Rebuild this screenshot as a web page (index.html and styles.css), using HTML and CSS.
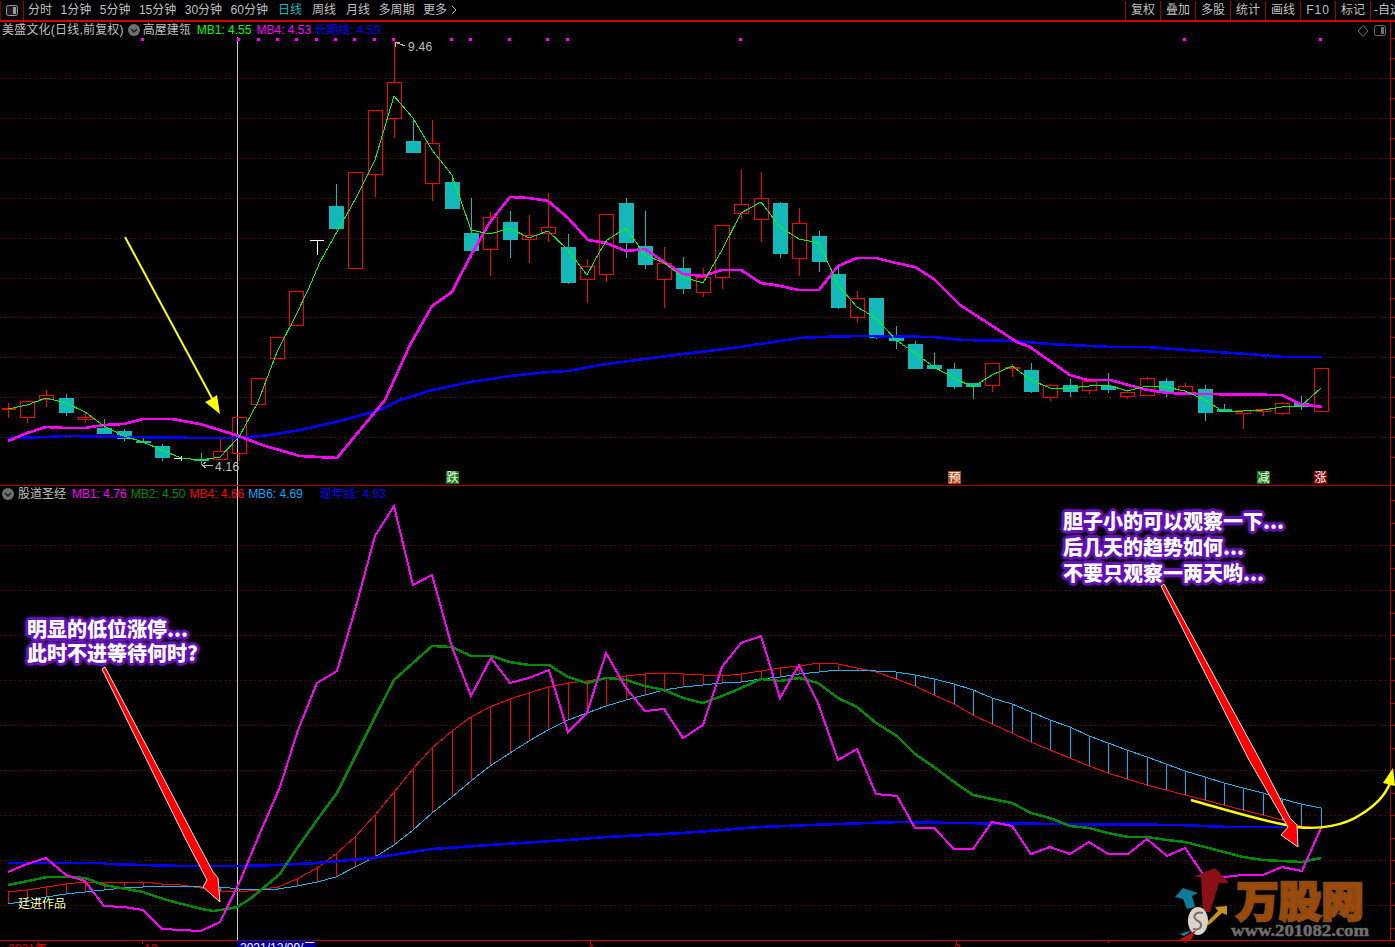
FILE: index.html
```html
<!DOCTYPE html>
<html lang="zh-CN">
<head>
<meta charset="utf-8">
<title>美盛文化</title>
<link rel="stylesheet" href="styles.css">
</head>
<body>
<div class="app">
  <header class="toolbar">
    <div class="tool-icon">
      <svg class="layout-icon" viewBox="0 0 12 11"><rect x="0.5" y="0.5" width="11" height="10" rx="2" class="layout-frame"/><rect x="7" y="2" width="3" height="7" class="layout-fill"/></svg>
    </div>
    <nav class="periods">
      <span>分时</span><span>1分钟</span><span>5分钟</span><span>15分钟</span><span>30分钟</span><span>60分钟</span><span class="active nudge">日线</span><span class="nudge">周线</span><span class="nudge">月线</span><span>多周期</span><span class="more">更多<svg class="more-chev" viewBox="0 0 6 10"><path d="M1 1l4 4-4 4"/></svg></span>
    </nav>
    <nav class="tools">
      <span>复权</span><span>叠加</span><span>多股</span><span>统计</span><span>画线</span><span class="wide">F10</span><span>标记</span><span class="clip">-自选</span>
    </nav>
  </header>

  <section class="pane pane-main">
    <svg class="canvas" width="1395" height="463" viewBox="0 22 1395 463">
      <path class="grid" d="M0 78.5H1390M0 118.5H1390M0 158.5H1390M0 198.5H1390M0 238.5H1390M0 278.5H1390M0 317.5H1390M0 357.5H1390M0 397.5H1390M0 437.5H1390"/>
      <path class="axis" d="M1390.5 22V485M1390 38.5h5M1390 58.5h5M1390 78.5h5M1390 98.5h5M1390 118.5h5M1390 138.5h5M1390 158.5h5M1390 178.5h5M1390 198.5h5M1390 218.5h5M1390 238.5h5M1390 258.5h5M1390 278.5h5M1390 298.5h5M1390 317.5h5M1390 337.5h5M1390 357.5h5M1390 377.5h5M1390 397.5h5M1390 417.5h5M1390 437.5h5M1390 457.5h5"/>
      <path class="cross" d="M237.5 37V485"/>
      <path class="dots" d="M141 38h3v3h-3zM237 38h3v3h-3zM257 38h3v3h-3zM276 38h3v3h-3zM295 38h3v3h-3zM315 38h3v3h-3zM334 38h3v3h-3zM353 38h3v3h-3zM373 38h3v3h-3zM392 38h3v3h-3zM450 38h3v3h-3zM469 38h3v3h-3zM508 38h3v3h-3zM546 38h3v3h-3zM566 38h3v3h-3zM739 38h3v3h-3zM1183 38h3v3h-3zM1319 38h3v3h-3z"/>

      <path class="wick-teal" d="M66.5 394V416M104.5 419V434M124.5 429V441M143.5 437V443M162.5 444V461M201.5 453V465M336.5 184V230M413.5 118V153M452.5 175V209M471.5 198V258M510.5 211V258M568.5 234V284M626.5 198V258M645.5 211V269M683.5 257V294M780.5 202V258M819.5 231V272M838.5 267V309M876.5 298V339M896.5 326V349M915.5 341V369M934.5 353V369M954.5 363V389M973.5 383V399M1031.5 363V393M1070.5 379V397M1108.5 373V393M1166.5 378V397M1205.5 385V421M1224.5 404V412M1301.5 396V410"/>
      <path class="body-teal" d="M59 398h15v15h-15zM97 428h15v6h-15zM117 431h15v8h-15zM136 441h15v2h-15zM155 446h15v12h-15zM194 459h15v2h-15zM329 206h15v23h-15zM406 141h15v12h-15zM445 182h15v27h-15zM464 233h15v18h-15zM503 222h15v18h-15zM561 247h15v36h-15zM619 203h15v40h-15zM638 246h15v19h-15zM676 268h15v21h-15zM773 203h15v51h-15zM812 236h15v26h-15zM831 274h15v34h-15zM869 298h15v40h-15zM889 335h15v6h-15zM908 344h15v25h-15zM927 365h15v4h-15zM947 369h15v18h-15zM966 383h15v4h-15zM1024 370h15v22h-15zM1063 385h15v7h-15zM1101 386h15v4h-15zM1159 381h15v11h-15zM1198 389h15v24h-15zM1217 409h15v3h-15zM1294 403h15v4h-15z"/>
      <path class="candle-red" d="M1.5 409.5H16M1.5 408.5H16M8.5 403V418M20.5 401.5h14v16h-14zM27.5 418V423M39.5 395.5h14v4h-14zM46.5 390V395M46.5 400V407M78.5 417.5h14v2h-14zM85.5 413V417M85.5 420V423M213.5 451.5h14v8h-14zM220.5 439V451M232.5 417.5h14v36h-14zM239.5 454V461M251.5 378.5h14v26h-14zM270.5 337.5h14v21h-14zM289.5 291.5h14v34h-14zM348.5 172.5h14v96h-14zM368.5 110.5h14v64h-14zM375.5 175V197M387.5 82.5h14v36h-14zM394.5 40V82M394.5 119V138M425.5 143.5h14v40h-14zM432.5 120V143M432.5 184V201M483.5 217.5h14v32h-14zM490.5 212V217M490.5 250V276M522.5 235.5h14v4h-14zM529.5 215V235M529.5 240V263M541.5 227.5h14v6h-14zM548.5 193V227M548.5 234V242M580.5 266.5h14v13h-14zM587.5 259V266M587.5 280V303M599.5 214.5h14v60h-14zM606.5 275V282M657.5 263.5h14v16h-14zM664.5 247V263M664.5 280V308M696.5 277.5h14v15h-14zM703.5 268V277M703.5 293V297M715.5 225.5h14v52h-14zM722.5 278V289M734.5 204.5h14v9h-14zM741.5 170V204M741.5 214V219M754.5 198.5h14v21h-14zM761.5 172V198M761.5 220V242M792.5 223.5h14v35h-14zM799.5 208V223M799.5 259V276M850.5 298.5h14v19h-14zM857.5 291V298M857.5 318V323M985.5 363.5h14v22h-14zM992.5 386V392M1005.5 367.5h14v1h-14zM1012.5 364V377M1043.5 385.5h14v12h-14zM1050.5 384V385M1050.5 398V401M1082.5 381.5h14v9h-14zM1089.5 378V381M1089.5 391V394M1120.5 392.5h14v4h-14zM1127.5 390V392M1127.5 397V399M1140.5 378.5h14v17h-14zM1147.5 377V378M1178.5 386.5h14v6h-14zM1185.5 383V386M1185.5 393V395M1236.5 410.5h14v3h-14zM1243.5 414V429M1256.5 409.5h14v2h-14zM1263.5 412V416M1275.5 403.5h14v10h-14zM1282.5 402V403M1282.5 414V415M1314.5 368.5h14v43h-14z"/>
      <path class="doji" d="M174 458.5H182M181.5 456V461M310 240.5H324M317.5 240V255"/>

      <polyline class="ma-blue" points="8,438 46,437 66,436 200,438 239,438 270,435 300,430 340,421 380,410 400,400 432,390 471,382 510,376 548,372 568,371 600,365 667,356 733,348 800,338 820,337 860,336 933,337 963,340 1013,341 1050,344 1110,347 1147,347 1187,350 1247,354 1283,357 1322,357"/>
      <polyline class="ma-magenta" points="8,441 27,433 46,427 66,428 85,428 104,425 124,424 143,419 172,419 200,424 239,436 262,445 300,456 337,458 360,430 385,400 410,345 432,306 452,292 471,255 490,222 510,197 529,198 548,201 568,218 588,240 606,243 626,251 645,249 664,262 683,274 703,276 722,270 741,270 761,283 780,286 799,290 819,290 838,266 857,258 876,258 896,263 915,267 934,279 960,305 1017,342 1030,347 1070,375 1087,380 1110,380 1143,389 1167,393 1203,394 1282,395 1300,404 1322,407"/>
      <polyline class="ma-green" points="8,409 27,405 46,398 66,403 85,412 104,426 124,436 143,442 162,450 181,458 201,460 220,457 239,437 258,402 277,352 296,315 308,290 320,262 356,198 375,160 394,96 413,118 432,150 452,175 471,230 490,234 510,228 529,238 548,231 568,250 587,275 600,251 607,240 626,228 645,255 664,263 683,277 703,283 722,250 741,213 761,202 780,227 799,239 819,243 838,285 857,307 876,318 896,340 915,353 934,367 954,378 973,387 992,375 1012,366 1031,380 1050,388 1070,388 1089,386 1108,385 1127,391 1147,386 1166,387 1185,391 1205,400 1224,412 1243,411 1263,410 1282,407 1301,406 1321,388"/>

      <path class="arrow-yellow-line" d="M125 237L214 402"/>
      <path class="arrow-yellow-head" d="M220 414L205 402L211 399L217 395Z"/>

      <path class="leader" d="M405 46L395 42M395 42h5M395 42v5M213 465H202M202 465l4-3M202 465l4 3"/>
      <text class="price" x="408" y="51">9.46</text>
      <text class="price" x="215" y="471">4.16</text>

      <rect class="sig sig-green" x="446" y="471" width="13" height="13"/><text class="sig-text" x="452.5" y="482">跌</text>
      <rect class="sig sig-orange" x="948" y="471" width="13" height="13"/><text class="sig-text" x="954.5" y="482">预</text>
      <rect class="sig sig-green" x="1257" y="471" width="13" height="13"/><text class="sig-text" x="1263.5" y="482">减</text>
      <rect class="sig sig-red" x="1314" y="471" width="13" height="13"/><text class="sig-text" x="1320.5" y="482">涨</text>
    </svg>

    <div class="legend legend-main">
      <span class="title">美盛文化(日线,前复权)</span>
      <svg class="chev" viewBox="0 0 12 12"><circle cx="6" cy="6" r="6" class="chev-bg"/><path d="M3 5l3 3 3-3" class="chev-mark"/></svg>
      <span class="name">高屋建瓴</span>
      <span class="lime gap-6">MB1: 4.55</span>
      <span class="pink gap-5">MB4: 4.53</span>
      <span class="blue gap-3">长期线: 4.50</span>
    </div>
    <svg class="corner" width="34" height="14" viewBox="0 0 34 14">
      <path class="corner-line" d="M8 1.5L13 7 8 12.5 3 7Z"/>
      <rect class="corner-line" x="19.5" y="1.5" width="11" height="10" rx="2"/>
      <rect class="corner-fill" x="26" y="3" width="3" height="7"/>
    </svg>
  </section>

  <section class="pane pane-sub">
    <svg class="canvas" width="1395" height="454" viewBox="0 486 1395 454">
      <path class="grid" d="M0 545.5H1390M0 590.5H1390M0 635.5H1390M0 680.5H1390M0 725.5H1390M0 770.5H1390M0 815.5H1390M0 860.5H1390M0 905.5H1390"/>
      <path class="axis" d="M1390.5 486V940M1390 500.5h5M1390 523.5h5M1390 545.5h5M1390 568.5h5M1390 590.5h5M1390 613.5h5M1390 635.5h5M1390 658.5h5M1390 680.5h5M1390 703.5h5M1390 725.5h5M1390 748.5h5M1390 770.5h5M1390 793.5h5M1390 815.5h5M1390 838.5h5M1390 860.5h5M1390 883.5h5M1390 905.5h5M1390 928.5h5"/>
      <path class="cross" d="M237.5 486V940"/>

      <path class="hatch-red" d="M8.5 892V904M27.5 890V901M46.5 887V897M66.5 884V894M85.5 882V892M104.5 882V890M124.5 882V888M143.5 882V887M162.5 884V886M181.5 885V886M278.5 887V889M297.5 879V886M317.5 868V882M336.5 854V877M355.5 837V867M375.5 815V857M394.5 792V845M413.5 769V830M432.5 748V813M452.5 731V797M471.5 717V781M490.5 707V766M510.5 699V753M529.5 693V741M548.5 687V730M568.5 683V720M587.5 681V713M606.5 678V706M626.5 676V700M645.5 674V695M664.5 673V690M683.5 674V687M703.5 675V685M722.5 676V683M741.5 674V682M761.5 671V679M780.5 668V677M799.5 666V674M819.5 663V672M838.5 664V670M857.5 668V670"/>
      <path class="hatch-cyan" d="M201.5 887V888M220.5 887V891M239.5 889V892M258.5 889V890M876.5 671V672M896.5 672V679M915.5 675V686M934.5 679V695M954.5 684V704M973.5 690V715M992.5 698V724M1012.5 704V733M1031.5 712V742M1050.5 720V750M1070.5 727V758M1089.5 736V766M1108.5 743V773M1127.5 750V779M1147.5 757V785M1166.5 764V790M1185.5 771V795M1205.5 777V800M1224.5 783V805M1243.5 788V810M1263.5 793V815M1282.5 799V820M1301.5 804V826M1321.5 808V828"/>
      <polyline class="ln-red" points="8,892 27,890 46,887 66,884 85,882 104,882 124,882 143,882 162,884 181,885 201,888 220,891 239,892 258,890 278,887 297,879 317,868 336,854 355,837 375,815 394,792 413,769 432,748 452,731 471,717 490,707 510,699 529,693 548,687 568,683 587,681 606,678 626,676 645,674 664,673 683,674 703,675 722,676 741,674 761,671 780,668 799,666 819,663 838,664 857,668 876,672 896,679 915,686 934,695 954,704 973,715 992,724 1012,733 1031,742 1050,750 1070,758 1089,766 1108,773 1127,779 1147,785 1166,790 1185,795 1205,800 1224,805 1243,810 1263,815 1282,820 1301,826 1321,828"/>
      <polyline class="ln-cyan" points="8,904 27,901 46,897 66,894 85,892 104,890 124,888 143,887 162,886 181,886 201,887 220,887 239,889 258,889 278,889 297,886 317,882 336,877 355,867 375,857 394,845 413,830 432,813 452,797 471,781 490,766 510,753 529,741 548,730 568,720 587,713 606,706 626,700 645,695 664,690 683,687 703,685 722,683 741,682 761,679 780,677 799,674 819,672 838,670 857,670 876,671 896,672 915,675 934,679 954,684 973,690 992,698 1012,704 1031,712 1050,720 1070,727 1089,736 1108,743 1127,750 1147,757 1166,764 1185,771 1205,777 1224,783 1243,788 1263,793 1282,799 1301,804 1321,808"/>
      <polyline class="ln-blue" points="8,863 103,863 107,864 143,865 182,866 240,866 277,865 317,863 373,858 432,849 490,845 568,840 607,837 683,833 760,827 837,824 900,822 953,823 1060,824 1180,825 1227,827 1285,827"/>
      <polyline class="ln-green" points="8,885 28,881 47,877 67,877 85,878 104,885 143,892 163,899 182,904 202,909 213,911 227,909 237,907 250,899 280,874 298,847 317,820 337,793 355,757 375,717 394,680 413,663 432,646 452,647 471,656 491,656 510,662 529,665 549,665 568,677 587,683 606,678 626,680 645,686 664,690 683,698 703,703 722,696 741,688 761,679 780,681 799,678 818,683 838,698 857,707 876,723 897,736 915,754 934,767 954,782 973,795 992,799 1012,803 1031,813 1050,818 1070,826 1089,828 1108,833 1128,837 1147,837 1167,840 1185,842 1205,847 1224,852 1243,857 1263,860 1282,861 1302,862 1321,858"/>
      <polyline class="ln-magenta" points="8,872 27,864 46,858 66,875 85,881 104,906 124,907 143,910 162,929 181,930 201,931 220,922 240,881 260,833 280,787 298,730 317,683 337,671 355,610 375,536 394,506 413,585 432,575 452,647 471,696 491,658 510,683 529,678 549,670 568,732 587,713 606,653 626,688 645,711 664,709 683,738 703,725 722,667 741,643 761,636 780,698 799,665 818,703 838,760 857,749 876,794 897,796 915,828 934,828 954,849 973,849 992,822 1012,826 1031,854 1050,847 1070,854 1089,842 1108,854 1128,854 1147,839 1167,856 1185,848 1205,877 1224,877 1243,875 1263,875 1282,867 1302,871 1321,828"/>

      <path class="curve" d="M1191 800C1230 811 1265 822 1297 827C1320 830 1345 825 1360 815C1375 806 1385 796 1390 783"/>
      <path class="curve-head" d="M1393 768L1383 783L1395 786Z"/>

      <path class="big-arrow" d="M102 669L105 667L196 840L213 872L218 878L220 902L203 887L207 880L186 840Z"/>
      <path class="big-arrow" d="M1161 586L1164 584L1260 760L1290 818L1297 825L1298 847L1281 835L1288 827L1249 760Z"/>

      <text class="author" x="18" y="908">廷进作品</text>

      <g class="mark">
        <path class="mark-red" d="M1215 868L1193 877H1201L1203 912H1210L1219 883H1229Z"/>
        <path class="mark-teal" d="M1175 897L1183 888L1198 893L1192 896L1195 907L1187 909L1183 899Z"/>
        <path class="mark-gold" d="M1206 923L1218 911L1215 907L1227 906L1227 915L1222 913L1209 925Z"/>
        <ellipse class="mark-ball" cx="1198" cy="921" rx="10" ry="14"/>
        <path class="mark-dollar" d="M1203 913C1195 911 1191 918 1198 921C1204 924 1201 931 1193 929"/>
        <path class="mark-streak-red" d="M1179 940L1196 930L1191 940Z"/>
        <path class="mark-streak-blue" d="M1180 934L1193 930L1184 936Z"/>
        <text class="mark-name" x="1236" y="917" textLength="128" lengthAdjust="spacingAndGlyphs">万股网</text>
        <text class="mark-url" x="1231" y="936" textLength="138" lengthAdjust="spacingAndGlyphs">www.201082.com</text>
      </g>
    </svg>

    <div class="legend legend-sub">
      <svg class="chev" viewBox="0 0 12 12"><circle cx="6" cy="6" r="6" class="chev-bg"/><path d="M3 5l3 3 3-3" class="chev-mark"/></svg>
      <span class="name-sub">股道圣经</span>
      <span class="pink gap-6">MB1: 4.76</span>
      <span class="dgreen gap-4">MB2: 4.50</span>
      <span class="red gap-4">MB4: 4.66</span>
      <span class="sky gap-4">MB6: 4.69</span>
      <span class="blue gap-17">现年线: 4.93</span>
    </div>

    <p class="note note-left">明显的低位涨停...<br>此时不进等待何时?</p>
    <p class="note note-right">胆子小的可以观察一下...<br>后几天的趋势如何...<br>不要只观察一两天哟...</p>
  </section>

  <footer class="time-axis">
    <svg class="canvas" width="1395" height="7" viewBox="0 940 1395 7">
      <path class="axis-strong" d="M0 940.5H1395M142.5 941V944M590.5 941V944M956.5 941V944M1108.5 941V943M1185.5 941V943"/>
      <rect class="date-box" x="238" y="941" width="77" height="6"/>
      <text class="tick" x="8" y="953">2021年</text>
      <text class="tick" x="144" y="953">12</text>
      <text class="date" x="240" y="952">2021/12/09/三</text>
      <text class="tick" x="588" y="953">1</text>
      <text class="tick" x="954" y="953">2</text>
    </svg>
  </footer>
</div>
</body>
</html>
```
FILE: styles.css
```css
* { box-sizing: border-box; }
html, body { margin: 0; padding: 0; background: #000; }
body { font-family: "Liberation Sans", "Noto Sans CJK SC", sans-serif; font-size: 12px; color: #c0c0c0; overflow: hidden; }
.app { width: 1395px; height: 947px; display: flex; flex-direction: column; overflow: hidden; }

/* toolbar */
.toolbar { height: 22px; flex: none; display: flex; align-items: stretch; border-bottom: 2px solid #d40000; line-height: 20px; white-space: nowrap; }
.tool-icon { width: 24px; flex: none; display: flex; align-items: center; justify-content: center; border-left: 1px solid #800000; border-right: 1px solid #a00000; margin-top: 1px; }
.layout-icon { width: 12px; height: 11px; }
.layout-frame { fill: #1c1c1c; stroke: #9a9a9a; }
.layout-fill { fill: #9a9a9a; }
.periods { display: flex; gap: 8.5px; padding-left: 4px; }
.periods .active { color: #12bcc0; }
.periods .nudge { margin-left: 1.5px; }
.more { display: flex; align-items: center; gap: 4px; }
.more-chev { width: 6px; height: 10px; fill: none; stroke: #c0c0c0; stroke-width: 1; }
.tools { margin-left: auto; display: flex; width: 270px; flex: none; }
.tools span { width: 35px; flex: none; text-align: center; border-left: 1px solid #a00000; margin-top: 1px; line-height: 19px; }
.tools .wide { letter-spacing: 1px; }
.tools .clip { width: 26px; text-align: left; padding-left: 3px; overflow: hidden; }

/* panes */
.pane { position: relative; flex: none; }
.pane-main { height: 464px; border-bottom: 1px solid #a00000; }
.pane-sub { height: 454px; }
.canvas { display: block; }
.legend { position: absolute; left: 0; display: flex; align-items: center; height: 16px; line-height: 16px; white-space: nowrap; }
.legend-main { top: 0; padding-left: 2px; }
.legend-sub { top: 0; padding-left: 2px; }
.chev { width: 12px; height: 12px; flex: none; }
.chev-bg { fill: #707070; }
.chev-mark { fill: none; stroke: #1a1a1a; stroke-width: 1.4; }
.title { margin-right: 4px; letter-spacing: 0.2px; }
.name { margin-left: 3px; }
.name-sub { margin-left: 4px; }
.gap-3 { margin-left: 3px; }
.gap-4 { margin-left: 4px; }
.gap-5 { margin-left: 5px; }
.gap-6 { margin-left: 6px; }
.gap-17 { margin-left: 17px; }
.lime { color: #00ff00; }
.pink { color: #ff00ff; }
.blue { color: #0000ff; }
.dgreen { color: #008a00; }
.red { color: #ff0000; }
.sky { color: #00aaff; }
.corner { position: absolute; top: 2px; right: 6px; }
.corner-line { fill: none; stroke: #707070; }
.corner-fill { fill: #707070; }

/* chart drawing */
.canvas path, .canvas polyline { shape-rendering: crispEdges; }
.grid { stroke: #800000; stroke-width: 1; stroke-dasharray: 1 4; fill: none; }
.axis { stroke: #c00000; stroke-width: 1; fill: none; }
.cross { stroke: #c8c8c8; stroke-width: 1; fill: none; }
.dots { fill: #ff00ff; }
.wick-teal { stroke: #14b8b8; stroke-width: 1; fill: none; }
.body-teal { fill: #14b8b8; }
.candle-red { stroke: #ff0000; stroke-width: 1; fill: none; }
.doji { stroke: #fff; stroke-width: 1; fill: none; }
.ma-blue { fill: none; stroke: #0000ff; stroke-width: 2.6; }
.ma-magenta { fill: none; stroke: #ff00ff; stroke-width: 2.6; }
.ma-green { fill: none; stroke: #00ff00; stroke-width: 1; }
.canvas .arrow-yellow-line { stroke: #ffff00; stroke-width: 2; fill: none; shape-rendering: auto; }
.canvas .arrow-yellow-head { fill: #ffff00; shape-rendering: auto; }
.leader { stroke: #bbb; stroke-width: 1; fill: none; }
.price { fill: #c0c0c0; font-size: 12px; font-family: "Liberation Sans", sans-serif; letter-spacing: 0.3px; }
.sig-green { fill: #0c7d0c; }
.sig-orange { fill: #b04a12; }
.sig-red { fill: #850000; }
.sig-text { fill: #fff; font-size: 12px; text-anchor: middle; font-family: "Noto Sans CJK SC", sans-serif; }

.hatch-red { stroke: #ff0000; stroke-width: 1; fill: none; }
.hatch-cyan { stroke: #00b4ff; stroke-width: 1; fill: none; }
.ln-red { stroke: #ff0000; stroke-width: 1; fill: none; }
.ln-cyan { stroke: #12b8f0; stroke-width: 1; fill: none; }
.ln-blue { stroke: #0000ff; stroke-width: 2.6; fill: none; }
.ln-green { stroke: #008a00; stroke-width: 2.5; fill: none; }
.ln-magenta { stroke: #ff00ff; stroke-width: 2; fill: none; }
.canvas .curve { fill: none; stroke: #ffff00; stroke-width: 2.4; shape-rendering: auto; }
.canvas .curve-head { fill: #ffff00; shape-rendering: auto; }
.canvas .big-arrow { fill: #ff0000; stroke: #e8e8e8; stroke-width: 1; stroke-linejoin: miter; shape-rendering: auto; }
.author { fill: #ffffa8; font-size: 12px; font-family: "Noto Sans CJK SC", sans-serif; }

.canvas .mark-red { fill: #8a1016; stroke: none; shape-rendering: auto; }
.canvas .mark-teal { fill: #107b98; shape-rendering: auto; }
.canvas .mark-gold { fill: #c6901c; shape-rendering: auto; }
.mark-ball { fill: #d8d4cc; }
.canvas .mark-dollar { fill: none; stroke: #7a6a60; stroke-width: 2; shape-rendering: auto; }
.canvas .mark-streak-red { fill: #b01818; shape-rendering: auto; }
.canvas .mark-streak-blue { fill: #1686a8; shape-rendering: auto; }
.mark-name { fill: #a04a06; stroke: #8c4a14; stroke-width: 2.5; font-size: 42px; font-weight: 900; font-family: "Noto Sans CJK SC", sans-serif; }
.mark-url { fill: #6e6e6e; stroke: #6e6e6e; stroke-width: 0.5; font-size: 16px; font-weight: bold; font-family: "Liberation Serif", serif; }

/* callouts */
.note { position: absolute; margin: 0; color: #fff; font-family: "Noto Sans CJK SC", sans-serif; font-size: 20px; font-weight: 900; white-space: nowrap;
  text-shadow: 2px 0 #6510b8, -2px 0 #6510b8, 0 2px #6510b8, 0 -2px #6510b8, 2px 2px #6510b8, -2px 2px #6510b8, 2px -2px #6510b8, -2px -2px #6510b8, 3px 0 #6510b8, -3px 0 #6510b8, 0 3px #6510b8, 0 -3px #6510b8, 0 0 7px #8a6ad0; }
.note-left { left: 27px; top: 131px; line-height: 24px; }
.note-right { left: 1063px; top: 22px; line-height: 26px; }

/* time axis */
.time-axis { flex: none; height: 7px; overflow: hidden; }
.axis-strong { stroke: #d00000; stroke-width: 1; fill: none; }
.date-box { fill: #000090; stroke: #0000c0; }
.tick { fill: #e00000; font-size: 12px; font-family: "Liberation Sans", "Noto Sans CJK SC", sans-serif; }
.date { fill: #fff; font-size: 12px; font-family: "Liberation Sans", "Noto Sans CJK SC", sans-serif; }
```
